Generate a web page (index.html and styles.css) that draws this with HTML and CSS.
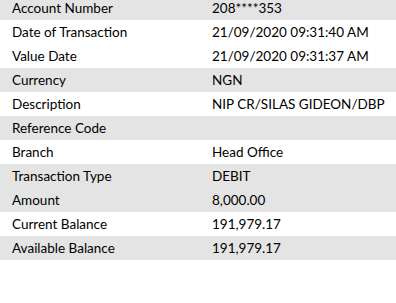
FILE: index.html
```html
<!DOCTYPE html>
<html>
<head>
<meta charset="utf-8">
<link rel="stylesheet" href="styles.css">
</head>
<body>
<div class="details">
  <div class="row shaded"><span class="label">Account Number</span><span class="value">208****353</span></div>
  <div class="row"><span class="label">Date of Transaction</span><span class="value">21/09/2020 09:31:40 AM</span></div>
  <div class="row"><span class="label">Value Date</span><span class="value">21/09/2020 09:31:37 AM</span></div>
  <div class="row shaded"><span class="label">Currency</span><span class="value">NGN</span></div>
  <div class="row"><span class="label">Description</span><span class="value">NIP CR/SILAS GIDEON/DBP</span></div>
  <div class="row shaded"><span class="label">Reference Code</span><span class="value"></span></div>
  <div class="row"><span class="label">Branch</span><span class="value">Head Office</span></div>
  <div class="row shaded"><span class="label">Transaction Type</span><span class="value">DEBIT</span></div>
  <div class="row shaded"><span class="label">Amount</span><span class="value">8,000.00</span></div>
  <div class="row"><span class="label">Current Balance</span><span class="value">191,979.17</span></div>
  <div class="row shaded"><span class="label">Available Balance</span><span class="value">191,979.17</span></div>
</div>
</body>
</html>
```

FILE: styles.css
```css
html, body {
  margin: 0;
  padding: 0;
  background: #ffffff;
}
body {
  font-family: "Lato", "Open Sans", sans-serif;
  font-size: 13.5px;
  color: #000000;
  overflow: hidden;
}
.details {
  margin-top: -4px;
}
.row {
  display: grid;
  grid-template-columns: 200px 1fr;
  height: 24px;
  align-items: center;
  padding-left: 12px;
}
.row.shaded {
  background: #e4e4e4;
}
.label, .value {
  white-space: nowrap;
  line-height: 24px;
}
```
